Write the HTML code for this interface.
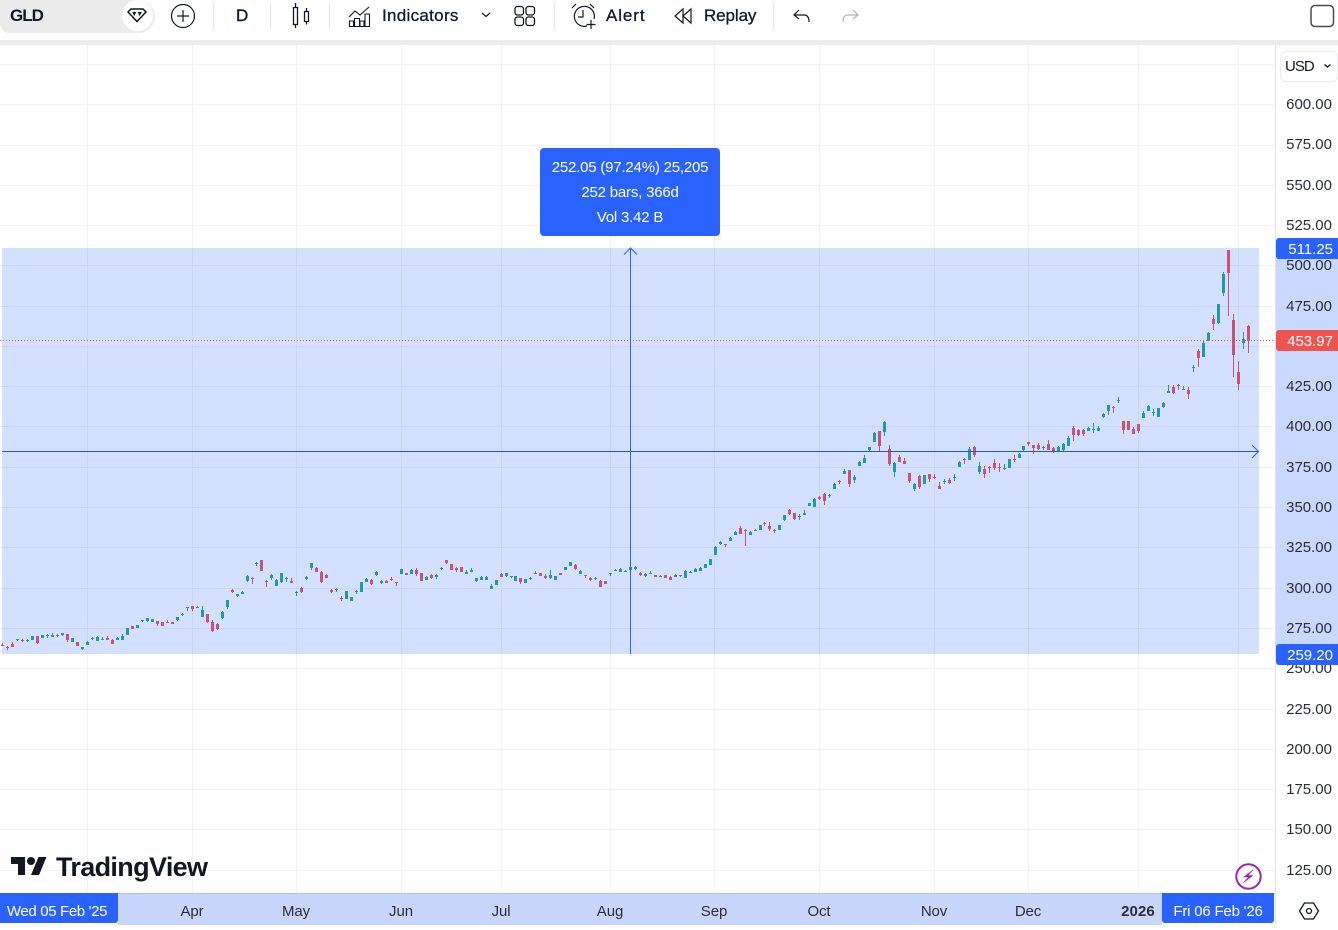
<!DOCTYPE html>
<html><head><meta charset="utf-8"><title>GLD</title>
<style>
html,body{margin:0;padding:0;background:#fff}
body{width:1338px;height:925px;overflow:hidden;position:relative;font-family:"Liberation Sans",sans-serif;color:#131722}
.a{position:absolute}
.sep{position:absolute;top:2px;width:1px;height:28px;background:#e6e6e6}
.tb{position:absolute;top:5px;font-size:17px;line-height:22px;color:#0f1a2c;-webkit-text-stroke:.3px #0f1a2c}
.p{position:absolute;left:1276px;width:56px;margin-top:1px;text-align:right;font-size:15px;line-height:20px;color:#2a2e39}
.l{position:absolute;left:1276px;width:62px;height:21px;border-radius:3px 0 0 3px;color:#fff;font-size:15px;line-height:23px;text-align:right;box-sizing:border-box;padding-right:5px}
.t{position:absolute;top:902px;width:80px;margin-left:-40px;text-align:center;font-size:15px;line-height:20px;letter-spacing:-.1px;color:#2a2e39}
</style></head><body>
<div class="a" style="left:0;top:40px;width:1338px;height:5px;background:#ebebeb"></div>
<div class="a" style="left:0;top:0;width:155px;height:33px;background:#ebebeb;border-radius:0 17px 17px 10px"></div>
<div class="a" style="left:122px;top:0;width:31px;height:31px;border-radius:50%;background:#fff"></div>
<div class="a" style="left:10px;top:5px;font-size:17px;line-height:22px;font-weight:bold;letter-spacing:-1px;color:#131722">GLD</div>
<div class="sep" style="left:213px"></div><div class="sep" style="left:270px"></div><div class="sep" style="left:329px"></div><div class="sep" style="left:554px"></div><div class="sep" style="left:773px"></div>
<div class="a" style="left:236px;top:5px;font-size:17px;line-height:22px;color:#0f1a2c;-webkit-text-stroke:.4px #0f1a2c">D</div>
<div class="tb" style="left:382px;letter-spacing:.3px">Indicators</div>
<div class="tb" style="left:606px;letter-spacing:.9px">Alert</div>
<div class="tb" style="left:704px;letter-spacing:-.1px">Replay</div>
<svg class="a" style="left:0;top:0" width="1338" height="40" fill="none" stroke="#131722" stroke-width="1.2">
<path d="M128 12l3-3h12l3 3-9 9.500z" stroke-width="1.500"/><path d="M133 12.500h2.500l-1.250 2.500zM138.500 12.500h2.500l-1.250 2.500z" fill="#131722" stroke-width="1"/>
<circle cx="183" cy="16" r="11.500"/><path d="M177 16h12M183 10v12"/>
<path d="M293.500 7.500h4v17h-4zM295.500 3v4.500M295.500 24.500v3.500M304.500 11.500h4v10h-4zM306.500 8v3.500M306.500 21.500v3" stroke-width="1.300"/>
<path d="M349 17l6-6 5 4 9-8M349 26.500h20.500M349.500 21h4v5.500h-4zM354.500 18.500h5v8h-5zM360 21h4v5.500h-4zM365 14h4.500v12.500H365z" stroke-width="1.100"/>
<path d="M482 13l4 3.500 4-3.500"/>
<rect x="515" y="6.500" width="8.500" height="8.500" rx="2.500" stroke-width="1.300"/><rect x="526" y="6.500" width="8.500" height="8.500" rx="2.500" stroke-width="1.300"/><rect x="515" y="17" width="8.500" height="8.500" rx="2.500" stroke-width="1.300"/><rect x="526" y="17" width="8.500" height="8.500" rx="2.500" stroke-width="1.300"/>
<path d="M587 26a10 10 0 1 1 7-7M583 10v7h-5M572 8l4-4M590 4l4 4M591 20v9M586.500 24.500h9"/>
<path d="M683 9l-8 7 8 7zM691 9l-8 7 8 7z" stroke-width="1.200"/>
<path d="M799 10l-5 5 5 4M794 15h10c3 0 5 2 5 7" stroke-width="1.200"/>
<path d="M853 10l5 5-5 4M858 15h-10c-3 0-5 2-5 7" stroke="#b2b5be" stroke-width="1.200"/>
<rect x="1311" y="5.500" width="22.500" height="21" rx="4" stroke="#4a4a4a" stroke-width="1.500"/>
</svg>

<svg class="a" style="left:0;top:45px" width="1275" height="848" viewBox="0 45 1275 848" shape-rendering="crispEdges" fill="none">
<path stroke="#f1f2f5" d="M0 64.500H1275M0 104.500H1275M0 145.500H1275M0 185.500H1275M0 225.500H1275M0 265.500H1275M0 306.500H1275M0 346.500H1275M0 386.500H1275M0 426.500H1275M0 467.500H1275M0 507.500H1275M0 547.500H1275M0 588.500H1275M0 628.500H1275M0 668.500H1275M0 709.500H1275M0 749.500H1275M0 789.500H1275M0 829.500H1275M0 870.500H1275M87.500 45V893M192.500 45V893M296.500 45V893M401.500 45V893M501.500 45V893M610.500 45V893M714.500 45V893M819.500 45V893M934.500 45V893M1028.500 45V893M1138.500 45V893M1238.500 45V893"/>
<rect x="2" y="248" width="1257" height="406" fill="#2962ff" fill-opacity=".2"/>
<path stroke="#2298ac" d="M17.500 639V641M27.500 639V642M47.500 634V638M52.500 633V637M62.500 633V636M82.500 647V650M87.500 641V645M92.500 637V640M97.500 636V641M102.500 637V640M117.500 637V640M122.500 634V640M142.500 620V622M147.500 618V622M177.500 617V621M182.500 613V616M187.500 607V611M202.500 606V617M222.500 611V619M227.500 600V609M237.500 594V597M242.500 591V594M247.500 575V582M256.500 562V566M271.500 574V580M276.500 579V586M281.500 573V583M286.500 577V582M296.500 591V596M306.500 576V580M311.500 563V570M336.500 588V592M356.500 590V594M366.500 578V582M376.500 571V576M381.500 580V584M411.500 569V574M426.500 576V580M436.500 574V579M441.500 567V570M466.500 570V574M471.500 568V572M476.500 578V582M481.500 576V580M486.500 576V580M491.500 584V589M506.500 573V577M511.500 576V578M530.500 577V580M535.500 571V574M550.500 570V579M580.500 570V574M595.500 577V580M610.500 573V576M615.500 569V571M620.500 568V572M625.500 570V572M635.500 566V570M645.500 573V577M650.500 571V574M660.500 575V577M675.500 574V577M685.500 570V578M690.500 571V573M695.500 568V572M700.500 567V571M715.500 546V555M720.500 541V545M730.500 537V541M735.500 531V535M750.500 531V535M784.500 515V521M799.500 514V520M804.500 510V515M814.500 498V507M829.500 494V498M834.500 483V489M844.500 469V474M854.500 475V483M859.500 461V466M864.500 455V463M869.500 447V451M874.500 432V442M884.500 421V436M894.500 462V477M914.500 483V491M944.500 479V484M954.500 474V481M959.500 461V467M969.500 447V460M979.500 462V474M1004.500 464V470M1019.500 453V458M1023.500 446V451M1043.500 446V450M1058.500 446V451M1063.500 443V451M1068.500 436V446M1088.500 427V431M1093.500 423V433M1098.500 426V431M1103.500 413V418M1108.500 405V415M1118.500 397V403M1143.500 411V418M1148.500 405V411M1153.500 409V416M1163.500 402V408M1168.500 385V393M1183.500 386V390M1193.500 365V372M1203.500 341V357M1208.500 332V341M1218.500 304V324M1223.500 272V296M1243.500 332V349"/>
<path stroke="#2298ac" stroke-width="3" d="M17.500 639V640M27.500 640V641M32.500 636V640M42.500 635V638M47.500 635V636M52.500 635V637M62.500 633V635M72.500 638V642M82.500 647V649M87.500 642V645M92.500 638V639M97.500 637V641M102.500 639V640M117.500 638V640M122.500 636V640M127.500 628V635M137.500 625V628M142.500 620V621M147.500 618V621M152.500 619V622M177.500 617V620M182.500 614V615M187.500 607V608M202.500 610V617M222.500 612V618M227.500 600V607M237.500 594V596M242.500 592V594M247.500 576V581M256.500 563V564M271.500 575V578M276.500 580V586M281.500 573V582M286.500 578V579M296.500 592V593M306.500 577V579M311.500 563V568M336.500 589V590M346.500 591V599M351.500 597V601M356.500 591V592M361.500 582V592M366.500 579V582M376.500 572V575M381.500 581V583M401.500 569V574M411.500 570V574M426.500 577V580M436.500 575V577M441.500 568V569M466.500 572V574M471.500 570V572M476.500 578V581M481.500 577V580M486.500 577V580M491.500 586V589M496.500 580V585M506.500 573V576M511.500 576V577M515.500 576V581M525.500 579V583M530.500 578V579M535.500 573V574M550.500 575V578M555.500 576V580M565.500 567V570M570.500 562V566M580.500 571V574M595.500 578V579M610.500 573V574M615.500 570V571M620.500 569V572M625.500 571V572M630.500 567V570M635.500 567V569M645.500 574V576M650.500 573V574M660.500 576V577M675.500 575V577M685.500 571V578M690.500 572V573M695.500 569V572M700.500 568V571M705.500 564V568M710.500 559V565M715.500 547V555M720.500 542V544M730.500 538V541M735.500 532V535M750.500 532V535M760.500 525V530M779.500 525V530M784.500 515V520M799.500 516V517M804.500 513V515M809.500 503V506M814.500 499V507M829.500 495V496M834.500 484V489M844.500 471V474M854.500 477V480M859.500 462V466M864.500 458V463M869.500 447V450M874.500 433V442M884.500 422V432M894.500 463V472M914.500 484V489M924.500 475V484M944.500 481V482M954.500 477V478M959.500 462V467M969.500 449V460M979.500 466V472M1004.500 468V469M1009.500 459V468M1019.500 454V458M1023.500 446V450M1043.500 447V448M1058.500 447V451M1063.500 444V450M1068.500 438V446M1088.500 428V431M1093.500 429V430M1098.500 428V431M1103.500 414V417M1108.500 405V411M1118.500 400V401M1143.500 413V418M1148.500 406V411M1153.500 412V413M1158.500 408V417M1163.500 403V407M1168.500 391V393M1183.500 389V390M1193.500 367V368M1203.500 343V357M1208.500 333V341M1218.500 304V323M1223.500 274V293M1243.500 339V343"/>
<path stroke="#cb5272" d="M2.500 643V646M7.500 646V650M12.500 642V647M22.500 639V642M37.500 636V644M57.500 634V637M67.500 634V642M107.500 636V640M112.500 639V644M157.500 621V626M167.500 620V623M192.500 606V611M197.500 606V608M207.500 614V623M212.500 620V632M217.500 623V630M232.500 589V593M252.500 577V584M266.500 580V587M291.500 578V583M301.500 587V593M316.500 567V572M321.500 571V583M326.500 574V578M331.500 589V593M341.500 596V601M371.500 579V585M386.500 580V583M391.500 577V581M396.500 582V586M416.500 568V576M431.500 574V579M446.500 560V564M456.500 567V572M501.500 573V577M520.500 578V584M545.500 574V579M575.500 564V570M585.500 575V578M590.500 577V581M600.500 580V587M640.500 572V576M670.500 576V580M680.500 575V577M725.500 544V547M740.500 526V534M745.500 529V546M755.500 529V531M764.500 522V526M769.500 522V531M774.500 529V533M789.500 509V515M794.500 513V520M819.500 496V500M824.500 493V505M839.500 480V484M849.500 470V487M879.500 431V451M889.500 445V466M899.500 455V462M904.500 458V464M909.500 473V483M919.500 475V489M929.500 474V482M934.500 474V479M939.500 482V489M949.500 478V484M964.500 458V464M974.500 446V457M984.500 466V478M989.500 466V473M994.500 459V470M999.500 463V472M1014.500 455V462M1028.500 442V446M1033.500 445V454M1038.500 443V450M1048.500 440V450M1053.500 447V453M1073.500 426V441M1078.500 429V436M1083.500 429V436M1113.500 406V413M1123.500 421V434M1133.500 427V434M1138.500 424V433M1173.500 385V394M1178.500 384V390M1188.500 387V399M1198.500 349V367M1213.500 315V330M1228.500 250V316M1233.500 314V377M1238.500 361V390M1248.500 325V353"/>
<path stroke="#cb5272" stroke-width="3" d="M2.500 645V646M7.500 647V648M12.500 644V647M22.500 640V641M37.500 636V643M57.500 635V636M67.500 634V640M77.500 642V646M107.500 638V640M112.500 640V644M132.500 626V629M157.500 621V624M162.500 622V626M167.500 622V623M172.500 622V624M192.500 606V609M197.500 607V608M207.500 614V622M212.500 622V631M217.500 624V629M232.500 590V592M252.500 578V579M261.500 560V571M266.500 581V582M291.500 581V583M301.500 588V592M316.500 568V572M321.500 572V582M326.500 575V578M331.500 590V592M341.500 598V599M371.500 580V584M386.500 581V583M391.500 579V580M396.500 582V583M406.500 573V575M416.500 570V574M421.500 573V581M431.500 575V578M446.500 560V563M451.500 564V570M456.500 568V570M461.500 567V572M501.500 574V577M520.500 578V582M540.500 573V576M545.500 576V578M560.500 573V575M575.500 565V569M585.500 575V576M590.500 578V580M600.500 581V587M605.500 581V584M640.500 573V575M655.500 575V577M665.500 575V578M670.500 577V580M680.500 575V576M725.500 544V545M740.500 528V534M745.500 530V531M755.500 530V531M764.500 523V524M769.500 526V529M774.500 530V531M789.500 510V514M794.500 513V519M819.500 497V499M824.500 494V501M839.500 481V482M849.500 470V484M879.500 431V446M889.500 449V464M899.500 457V462M904.500 461V464M909.500 473V481M919.500 476V487M929.500 474V479M934.500 477V478M939.500 486V489M949.500 480V483M964.500 459V460M974.500 447V455M984.500 469V474M989.500 467V468M994.500 463V468M999.500 467V468M1014.500 459V460M1028.500 442V444M1033.500 445V448M1038.500 445V449M1048.500 444V450M1053.500 448V452M1073.500 428V435M1078.500 430V435M1083.500 430V434M1113.500 407V408M1123.500 421V430M1128.500 421V430M1133.500 429V434M1138.500 424V431M1173.500 387V393M1178.500 385V386M1188.500 390V394M1198.500 351V358M1213.500 319V324M1228.500 250V273M1233.500 320V355M1238.500 372V384M1248.500 326V341"/>
<path stroke="#f0525a" stroke-dasharray="1 2" d="M0 340.500H1275"/>
<path stroke="#2962ff" d="M630.500 248V654"/>
<path stroke="#2255dd" d="M2 451.500H1258"/>
<g shape-rendering="auto" stroke="#2962ff" stroke-width="1">
<path d="M624 254.500l6.500-6.500 6.500 6.500"/>
<path d="M1252 445l6.500 6.500-6.500 6.500"/>
</g>
</svg>

<div class="a" style="left:540px;top:148px;width:180px;height:88px;background:#2962ff;border-radius:4px;color:#fff;text-align:center;font-size:15px;line-height:25px;letter-spacing:-.2px;padding-top:7px;box-sizing:border-box">252.05 (97.24%) 25,205<br>252 bars, 366d<br>Vol 3.42 B</div>

<div class="a" style="left:1275px;top:45px;width:1px;height:880px;background:#e0e3eb"></div>
<div class="a" style="left:1276px;top:248px;width:62px;height:406px;background:#c9d8ff"></div>
<div class="a" style="left:1280px;top:51px;width:58px;height:31px;box-sizing:border-box;border:1px solid #ebedf0;border-radius:6px;background:#fff"></div>
<div class="a" style="left:1285px;top:57px;font-size:15px;line-height:20px;letter-spacing:-1px;color:#131722">USD</div>
<svg class="a" style="left:1322px;top:62px" width="12" height="8" fill="none" stroke="#131722" stroke-width="1.300"><path d="M2.500 2.500l3 2.500 3-2.500"/></svg>

<div class="p" style="top:94px">600.00</div><div class="p" style="top:134px">575.00</div><div class="p" style="top:175px">550.00</div><div class="p" style="top:215px">525.00</div><div class="p" style="top:255px">500.00</div><div class="p" style="top:296px">475.00</div><div class="p" style="top:336px">450.00</div><div class="p" style="top:376px">425.00</div><div class="p" style="top:416px">400.00</div><div class="p" style="top:457px">375.00</div><div class="p" style="top:497px">350.00</div><div class="p" style="top:537px">325.00</div><div class="p" style="top:578px">300.00</div><div class="p" style="top:618px">275.00</div><div class="p" style="top:658px">250.00</div><div class="p" style="top:699px">225.00</div><div class="p" style="top:739px">200.00</div><div class="p" style="top:779px">175.00</div><div class="p" style="top:819px">150.00</div><div class="p" style="top:860px">125.00</div>
<div class="l" style="top:238px;background:#2962ff">511.25</div>
<div class="l" style="top:330px;background:#ef5350">453.97</div>
<div class="l" style="top:644px;background:#2962ff">259.20</div>

<svg class="a" style="left:10px;top:853px" width="38" height="28" viewBox="0 0 36 28" fill="#131722"><path d="M14 22H7V11H0V4h14v18zM28 22h-8l7.500-18h8L28 22z"/><circle cx="20" cy="8" r="4"/></svg>
<div class="a" style="left:56px;top:851px;font-size:27px;line-height:32px;font-weight:bold;letter-spacing:-.65px;color:#131722">TradingView</div>
<svg class="a" style="left:1234px;top:862px" width="29" height="29" fill="none"><circle cx="14.500" cy="14.500" r="12.200" stroke="#9c27b0" stroke-width="2"/><path d="M19 8l-9.500 7h5L9 21l10-7.500h-5z" fill="#9c27b0" stroke="#9c27b0" stroke-width=".5"/></svg>

<div class="a" style="left:0;top:893px;width:1275px;height:1px;background:#cfd3de"></div>
<div class="a" style="left:118px;top:893px;width:1044px;height:32px;background:#c8d6fe"></div>
<div class="a" style="left:118px;top:893px;width:1044px;height:1px;background:#b3c0e0"></div>
<div class="a" style="left:0;top:893px;width:114px;height:30px;background:#2962ff;border-radius:0 0 3px 0;color:#fff;font-size:15px;line-height:37px;text-align:center;letter-spacing:-.35px;white-space:nowrap;padding-right:4px">Wed 05 Feb '25</div>
<div class="a" style="left:1162px;top:893px;width:112px;height:30px;background:#2962ff;border-radius:0 0 3px 3px;color:#fff;font-size:15px;line-height:37px;text-align:center;letter-spacing:-.2px;white-space:nowrap">Fri 06 Feb '26</div>
<div class="t" style="left:192px">Apr</div><div class="t" style="left:296px">May</div><div class="t" style="left:401px">Jun</div><div class="t" style="left:501px">Jul</div><div class="t" style="left:610px">Aug</div><div class="t" style="left:714px">Sep</div><div class="t" style="left:819px">Oct</div><div class="t" style="left:934px">Nov</div><div class="t" style="left:1028px">Dec</div><div class="t" style="left:1138px;font-weight:bold;letter-spacing:.1px">2026</div>
<svg class="a" style="left:1298px;top:901px" width="22" height="20" fill="none" stroke="#131722" stroke-width="1.300"><path d="M6.500 2h9l5 8-5 8h-9l-5-8z"/><circle cx="11" cy="10" r="2.500"/></svg>
</body></html>
